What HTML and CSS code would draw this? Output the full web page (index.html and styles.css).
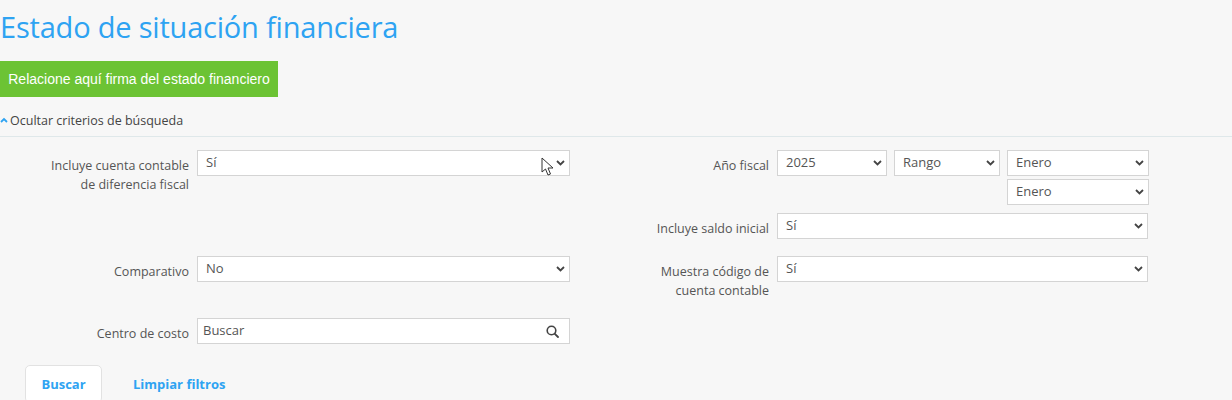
FILE: index.html
```html
<!DOCTYPE html>
<html lang="es">
<head>
<meta charset="utf-8">
<title>Estado de situación financiera</title>
<link rel="stylesheet" href="styles.css">
</head>
<body>
<div class="page">
  <h1 class="title">Estado de situación financiera</h1>
  <button class="btn-sign">Relacione aquí firma del estado financiero</button>
  <div class="toggle">
    <svg class="caret" width="8" height="6" viewBox="0 0 8 6"><path d="M1 5 L4 2 L7 5" fill="none" stroke="#2ea3f2" stroke-width="1.8"/></svg>
    <span>Ocultar criterios de búsqueda</span>
  </div>
  <div class="form">
    <div class="col col-left">
      <div class="field f-row1">
        <label class="lbl">Incluye cuenta contable<br>de diferencia fiscal</label>
        <div class="sel w-left">Sí
          <svg class="chev" width="9" height="6" viewBox="0 0 9 6"><path d="M1 1 L4.5 4.5 L8 1" fill="none" stroke="#444" stroke-width="1.8"/></svg>
          <svg class="cursor" width="14" height="20" viewBox="0 0 14 20"><path d="M1 1 L1 15 L4.5 12 L7 18 L9.5 17 L7 11 L12 11 Z" fill="#fff" stroke="#333" stroke-width="1"/></svg>
        </div>
      </div>
      <div class="field f-row2">
        <label class="lbl">Comparativo</label>
        <div class="sel w-left">No
          <svg class="chev" width="9" height="6" viewBox="0 0 9 6"><path d="M1 1 L4.5 4.5 L8 1" fill="none" stroke="#444" stroke-width="1.8"/></svg>
        </div>
      </div>
      <div class="field">
        <label class="lbl">Centro de costo</label>
        <div class="sel w-left search">Buscar
          <svg class="mag" width="13" height="13" viewBox="0 0 13 13"><circle cx="5.5" cy="5.5" r="4.3" fill="none" stroke="#444" stroke-width="1.6"/><path d="M8.6 8.6 L12 12" stroke="#444" stroke-width="1.8" stroke-linecap="round"/></svg>
        </div>
      </div>
    </div>
    <div class="col col-right">
      <div class="field">
        <label class="lbl">Año fiscal</label>
        <div class="fiscal">
          <div class="sel w-year">2025
            <svg class="chev" width="9" height="6" viewBox="0 0 9 6"><path d="M1 1 L4.5 4.5 L8 1" fill="none" stroke="#444" stroke-width="1.8"/></svg>
          </div>
          <div class="sel w-range">Rango
            <svg class="chev" width="9" height="6" viewBox="0 0 9 6"><path d="M1 1 L4.5 4.5 L8 1" fill="none" stroke="#444" stroke-width="1.8"/></svg>
          </div>
          <div class="months">
            <div class="sel w-month">Enero
              <svg class="chev" width="9" height="6" viewBox="0 0 9 6"><path d="M1 1 L4.5 4.5 L8 1" fill="none" stroke="#444" stroke-width="1.8"/></svg>
            </div>
            <div class="sel w-month">Enero
              <svg class="chev" width="9" height="6" viewBox="0 0 9 6"><path d="M1 1 L4.5 4.5 L8 1" fill="none" stroke="#444" stroke-width="1.8"/></svg>
            </div>
          </div>
        </div>
      </div>
      <div class="field f-saldo">
        <label class="lbl">Incluye saldo inicial</label>
        <div class="sel w-right">Sí
          <svg class="chev" width="9" height="6" viewBox="0 0 9 6"><path d="M1 1 L4.5 4.5 L8 1" fill="none" stroke="#444" stroke-width="1.8"/></svg>
        </div>
      </div>
      <div class="field">
        <label class="lbl">Muestra código de<br>cuenta contable</label>
        <div class="sel w-right">Sí
          <svg class="chev" width="9" height="6" viewBox="0 0 9 6"><path d="M1 1 L4.5 4.5 L8 1" fill="none" stroke="#444" stroke-width="1.8"/></svg>
        </div>
      </div>
    </div>
  </div>
  <div class="actions">
    <button class="btn-search">Buscar</button>
    <button class="btn-link">Limpiar filtros</button>
  </div>
</div>
</body>
</html>
```

FILE: styles.css
```css
html, body {
  margin: 0;
  padding: 0;
  background: #f7f7f7;
  height: 400px;
  overflow: hidden;
}
.page {
  font-family: "Open Sans", "DejaVu Sans", sans-serif;
  color: #555;
}
.title {
  margin: 0;
  padding-top: 8px;
  font-weight: 400;
  font-size: 29px;
  line-height: 38px;
  color: #2ea3f2;
  letter-spacing: -0.2px;
}
.btn-sign {
  display: block;
  margin-top: 15px;
  height: 36px;
  width: 278px;
  padding: 0;
  border: none;
  background: #6cc334;
  color: #fff;
  font-family: "Liberation Sans", Arial, sans-serif;
  font-size: 14px;
}
.toggle {
  display: flex;
  align-items: center;
  gap: 2px;
  padding-top: 15px;
  padding-bottom: 6px;
  line-height: 18px;
  font-size: 12.5px;
  color: #444;
  border-bottom: 1px solid #dfe8ea;
}
.caret {
  margin-bottom: 3px;
}
.form {
  display: flex;
  padding-top: 13px;
}
.col {
  display: flex;
  flex-direction: column;
}
.col-left {
  width: 616px;
  padding-left: 39px;
  box-sizing: border-box;
}
.col-right {
  padding-left: 3px;
}
.field {
  display: flex;
  align-items: flex-start;
  gap: 8px;
}
.f-row1 {
  height: 106px;
}
.f-row2 {
  height: 62px;
}
.f-saldo {
  margin-top: 8px;
  margin-bottom: 17px;
}
.lbl {
  width: 150px;
  flex: none;
  text-align: right;
  font-size: 12.5px;
  line-height: 19px;
  padding-top: 6px;
  color: #555;
}
.sel {
  position: relative;
  box-sizing: border-box;
  height: 26px;
  border: 1px solid #d4d4d4;
  background: #fff;
  font-size: 13px;
  line-height: 22px;
  padding-left: 8px;
  color: #555;
}
.w-left { width: 373px; }
.w-right { width: 371px; }
.w-year { width: 110px; }
.w-range { width: 106px; }
.w-month { width: 142px; }
.fiscal {
  display: flex;
  gap: 7px;
  align-items: flex-start;
}
.months {
  display: flex;
  flex-direction: column;
  gap: 3px;
}
.chev {
  position: absolute;
  right: 4px;
  top: 9px;
}
.cursor {
  position: absolute;
  right: 14px;
  top: 6px;
}
.search {
  padding-left: 5px;
}
.mag {
  position: absolute;
  right: 10px;
  top: 6px;
}
.actions {
  display: flex;
  align-items: center;
  margin-top: 21px;
  padding-left: 25px;
  gap: 10px;
}
.btn-search {
  width: 77px;
  height: 38px;
  background: #fff;
  border: 1px solid #e2e2e2;
  border-radius: 5px;
  color: #2ea3f2;
  font-family: "Open Sans", sans-serif;
  font-weight: 700;
  font-size: 13px;
}
.btn-link {
  background: none;
  border: none;
  padding: 0 21px;
  color: #2ea3f2;
  font-family: "Open Sans", sans-serif;
  font-weight: 700;
  font-size: 13px;
}
```
